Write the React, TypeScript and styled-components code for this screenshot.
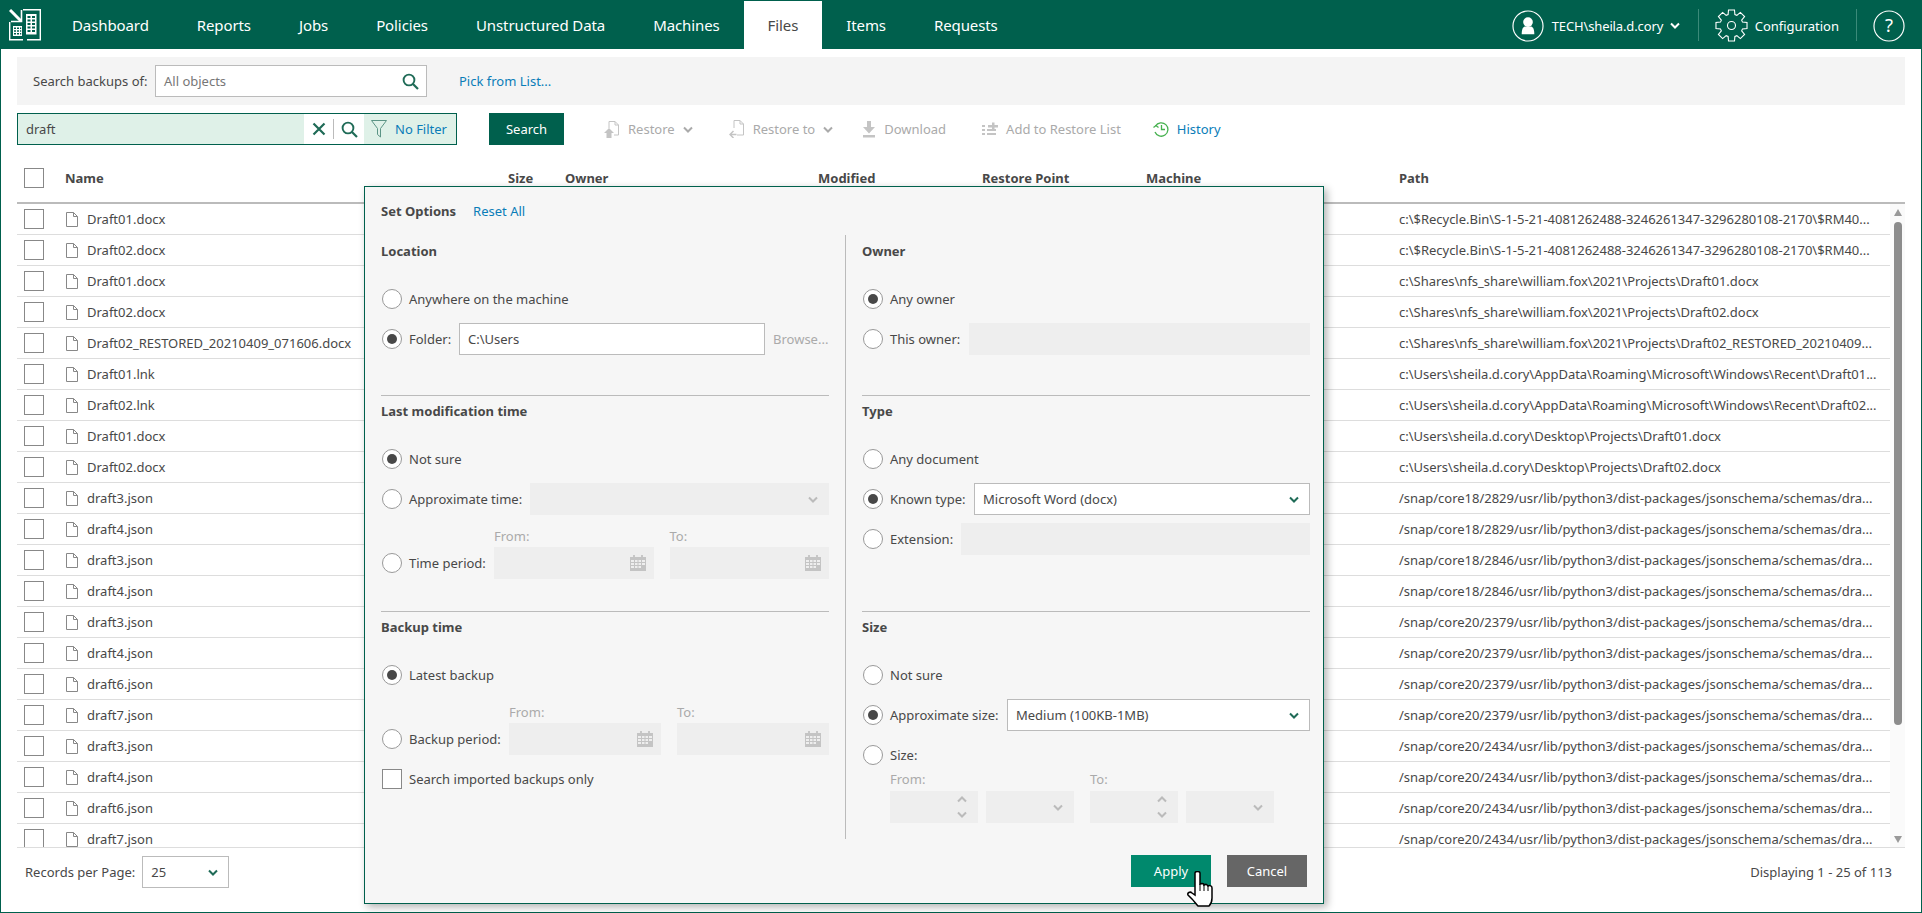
import React from "react";
import styled, { createGlobalStyle } from "styled-components";

const Global = createGlobalStyle`
  html, body { margin: 0; padding: 0; background: #fff; overflow: hidden; }
  body { font-family: "Noto Sans", "Open Sans", sans-serif; font-size: 13px; color: #484848; }
  * { box-sizing: border-box; }
`;

const GREEN = "#00604d";

const Page = styled.div`
  position: relative;
  width: 1922px;
  height: 913px;
  display: flex;
  flex-direction: column;
`;
const Header = styled.header`
  height: 49px;
  background: ${GREEN};
  display: flex;
  align-items: stretch;
  color: #fff;
  flex: none;
`;
const Logo = styled.div`
  width: 48px;
  padding: 9px 0 0 9px;
  flex: none;
`;
const Nav = styled.nav`
  display: flex;
  padding-top: 1px;
`;
const NavItem = styled.a<{ $active?: boolean }>`
  padding: 0 24px;
  font-size: 15px;
  letter-spacing: -0.1px;
  line-height: 48px;
  color: ${(p) => (p.$active ? "#484848" : "#fff")};
  background: ${(p) => (p.$active ? "#fff" : "transparent")};
`;
const HeaderRight = styled.div`
  margin-left: auto;
  display: flex;
  align-items: center;
  padding: 2px 17px 0 0;
`;
const UserName = styled.span`
  font-size: 13px;
  letter-spacing: -0.13px;
  margin: 0 6.5px 0 8px;
`;
const HeaderSep = styled.span<{ $ml: number; $mr: number }>`
  width: 1px;
  height: 32px;
  margin: -2px ${(p) => p.$mr}px 0 ${(p) => p.$ml}px;
  background: #3b8a79;
`;
const ConfigText = styled.span`
  font-size: 13px;
  margin-left: 7px;
`;

const Main = styled.main`
  flex: 1;
  display: flex;
  flex-direction: column;
  border: 1px solid ${GREEN};
  border-top: 0;
  padding: 8px 16px 0;
  min-height: 0;
`;
const SearchBand = styled.div`
  height: 48px;
  background: #f4f4f4;
  display: flex;
  align-items: center;
  padding-left: 16px;
  flex: none;
`;
const BandLabel = styled.span`
  width: 122px;
`;
const ObjectInput = styled.div`
  width: 272px;
  height: 32px;
  border: 1px solid #bbb;
  background: #fff;
  display: flex;
  align-items: center;
  justify-content: space-between;
  padding: 0 7px 0 8px;
  color: #777;
`;
const LinkText = styled.a<{ $ml?: number }>`
  color: #0a7db8;
  font-weight: 400;
  margin-left: ${(p) => p.$ml ?? 0}px;
`;
const ActionRow = styled.div`
  height: 32px;
  margin-top: 8px;
  display: flex;
  align-items: center;
  flex: none;
`;
const SearchBox = styled.div`
  width: 440px;
  height: 32px;
  border: 1px solid ${GREEN};
  background: #dff1e8;
  display: flex;
  align-items: center;
`;
const SearchValue = styled.span`
  width: 286px;
  padding-left: 8px;
`;
const SearchTools = styled.div`
  width: 60px;
  height: 30px;
  background: #fff;
  display: flex;
  align-items: center;
  justify-content: space-between;
  padding: 0 6px 0 8px;
`;
const ToolSep = styled.span`
  width: 1px;
  height: 20px;
  background: #bbb;
`;
const FilterPart = styled.div`
  display: flex;
  align-items: center;
  gap: 8px;
  padding-left: 7px;
  color: #0a7db8;
`;
const PrimaryButton = styled.button<{ $bg: string; $w: number }>`
  width: ${(p) => p.$w}px;
  height: 32px;
  border: 0;
  padding: 0;
  background: ${(p) => p.$bg};
  color: #fff;
  font: 13px "Noto Sans", "Open Sans", sans-serif;
`;
const SearchButton = styled(PrimaryButton)`
  margin-left: 32px;
`;
const ToolAction = styled.span<{ $ml: number; $on?: boolean }>`
  display: flex;
  align-items: center;
  gap: 8px;
  margin-left: ${(p) => p.$ml}px;
  color: ${(p) => (p.$on ? "#0a7db8" : "#aaa")};
`;
const Chevron = styled.svg`
  flex: none;
`;

const Cols = `49px 442px 57px 253px 164px 164px 253px 1fr`;
const TableHead = styled.div`
  height: 59px;
  padding-top: 9px;
  border-bottom: 2px solid #bbb;
  display: grid;
  grid-template-columns: ${Cols};
  align-items: center;
  font-weight: 700;
  flex: none;
`;
const NameHead = styled.span`
  margin-left: -1px;
`;
const Check = styled.span`
  display: block;
  width: 20px;
  height: 20px;
  border: 1px solid #888;
  background: #fff;
`;
const RowCheck = styled(Check)`
  margin-left: 7px;
`;
const TableScroll = styled.div`
  height: 644px;
  display: flex;
  overflow: hidden;
  border-bottom: 1px solid #ddd;
  flex: none;
`;
const Rows = styled.div`
  width: 1873px;
  flex: none;
`;
const Row = styled.div`
  height: 31px;
  border-bottom: 1px solid #ddd;
  display: grid;
  grid-template-columns: ${Cols};
  align-items: center;
`;
const NameCell = styled.div`
  display: flex;
  align-items: center;
  gap: 9px;
  grid-column: 2 / 8;
`;
const FileGlyph = styled.svg`
  flex: none;
`;
const PathCell = styled.div`
  white-space: nowrap;
  letter-spacing: -0.017px;
`;
const Track = styled.div`
  width: 15px;
  background: #fafafa;
  display: flex;
  flex-direction: column;
  align-items: center;
  padding: 5px 0 4px;
`;
const ArrowUp = styled.span`
  width: 0;
  height: 0;
  border: 4.5px solid transparent;
  border-top: 0;
  border-bottom: 7px solid #999;
`;
const ArrowDown = styled.span`
  width: 0;
  height: 0;
  margin-top: auto;
  border: 4.5px solid transparent;
  border-bottom: 0;
  border-top: 7px solid #999;
`;
const Thumb = styled.span`
  width: 8px;
  height: 503px;
  margin-top: 6px;
  background: #8c8c8c;
  border-radius: 4px;
`;
const Footer = styled.div`
  display: flex;
  align-items: flex-start;
  justify-content: space-between;
  padding: 8px 13px 0 8px;
  flex: 1;
`;
const PerPage = styled.div`
  display: flex;
  align-items: center;
  gap: 7px;
`;
const Select = styled.div<{ $w?: number }>`
  ${(p) => (p.$w ? `width: ${p.$w}px;` : "flex: 1;")}
  height: 32px;
  border: 1px solid #bbb;
  background: #fff;
  display: flex;
  align-items: center;
  justify-content: space-between;
  padding: 0 10px 0 8px;
`;
const Displaying = styled.span`
  line-height: 32px;
`;

/* Options popup */
const Dialog = styled.section`
  position: absolute;
  left: 364px;
  top: 186px;
  width: 960px;
  height: 718px;
  border: 1px solid ${GREEN};
  background: #f6f6f6;
  box-shadow: 3px 3px 8px rgba(0, 0, 0, 0.3);
  padding: 0 13px 0 16px;
  display: flex;
  flex-direction: column;
`;
const DialogHead = styled.div`
  height: 48px;
  display: flex;
  align-items: center;
  font-weight: 700;
  flex: none;
`;
const OptionCols = styled.div`
  display: flex;
  height: 604px;
  flex: none;
`;
const Col = styled.div<{ $left?: boolean }>`
  flex: none;
  width: ${(p) => (p.$left ? 465 : 464)}px;
  ${(p) =>
    p.$left
      ? "padding-right: 16px; border-right: 1px solid #bbb;"
      : "padding-left: 16px;"}
`;
const Section = styled.div<{ $h: number; $line?: boolean }>`
  height: ${(p) => p.$h}px;
  border-top: 1px solid ${(p) => (p.$line ? "#bbb" : "transparent")};
`;
const Heading = styled.h3`
  margin: 0 0 17px;
  height: 30px;
  line-height: 30px;
  font-size: 13px;
  font-weight: 700;
`;
const Stack = styled.div`
  display: flex;
  flex-direction: column;
  gap: 8px;
`;
const OptRow = styled.div<{ $h?: number }>`
  height: ${(p) => p.$h ?? 32}px;
  display: flex;
  align-items: center;
`;
const Radio = styled.span<{ $on?: boolean }>`
  width: 20px;
  height: 20px;
  margin: 0 7px 0 1px;
  border-radius: 50%;
  border: 1px solid #999;
  background: #fff;
  display: flex;
  align-items: center;
  justify-content: center;
  flex: none;
  &::after {
    content: "";
    display: ${(p) => (p.$on ? "block" : "none")};
    width: 10px;
    height: 10px;
    border-radius: 50%;
    background: #484848;
  }
`;
const DialogCheck = styled(Check)`
  margin: 0 7px 0 1px;
  flex: none;
`;
const OptLabel = styled.span<{ $w?: number }>`
  white-space: nowrap;
  flex: none;
  ${(p) => (p.$w ? `width: ${p.$w}px;` : "")}
`;
const TextField = styled.div<{ $w?: number; $off?: boolean; $chev?: boolean }>`
  ${(p) => (p.$w ? `width: ${p.$w}px; flex: none;` : "flex: 1;")}
  height: 32px;
  background: ${(p) => (p.$off ? "#eee" : "#fff")};
  border: ${(p) => (p.$off ? "0" : "1px solid #bbb")};
  display: flex;
  align-items: center;
  justify-content: space-between;
  padding: 0 ${(p) => (p.$chev ? 11 : 8)}px 0 8px;
`;
const Browse = styled.span`
  margin-left: 8px;
  color: #aaa;
`;
const DimLabels = styled.div<{ $pad: number }>`
  height: 24px;
  padding: 1px 0 0 ${(p) => p.$pad}px;
  display: grid;
  grid-template-columns: 1fr 1fr;
  column-gap: 16px;
  align-items: center;
  color: #aaa;
`;
const Pair = styled.div`
  flex: 1;
  display: grid;
  grid-template-columns: 1fr 1fr;
  column-gap: 16px;
`;
const SizeGroup = styled.div`
  margin-top: 4px;
`;
const SizeGrid = styled.div`
  padding-left: 28px;
  display: grid;
  grid-template-columns: 184px 184px;
  column-gap: 16px;
`;
const SizeLabel = styled.div`
  height: 24px;
  line-height: 24px;
  color: #aaa;
`;
const SizePair = styled.div`
  display: grid;
  grid-template-columns: 88px 88px;
  column-gap: 8px;
`;
const Spinner = styled.span`
  display: flex;
  flex-direction: column;
  gap: 8px;
`;
const DialogActions = styled.div`
  flex: 1;
  display: flex;
  justify-content: flex-end;
  gap: 16px;
  padding: 16px 3px 0 0;
`;
const HandCursor = styled.svg`
  position: absolute;
  left: 1187px;
  top: 871px;
`;

const C = ({ color = "#1f6b57", up = false }: { color?: string; up?: boolean }) => (
  <Chevron width="10" height="7" viewBox="0 0 10 7">
    <path d={up ? "M1 5.5 5 1.5l4 4" : "M1 1.5l4 4 4-4"} fill="none" stroke={color} strokeWidth="2" />
  </Chevron>
);
const Mag = () => (
  <svg width="17" height="17" viewBox="0 0 17 17">
    <circle cx="7" cy="7" r="5.4" fill="none" stroke="#1f6b57" strokeWidth="1.9" />
    <path d="M11 11l5 5" stroke="#1f6b57" strokeWidth="2.2" />
  </svg>
);
const FileIco = () => (
  <FileGlyph width="12" height="15" viewBox="0 0 12 15">
    <path d="M.5.5h7l4 4v10H.5z M7.5.5v4h4" fill="#fff" stroke="#888" />
  </FileGlyph>
);
const Cal = () => (
  <svg width="16" height="16" viewBox="0 0 16 16">
    <path d="M4 0v3M12 0v3" stroke="#bbb" strokeWidth="1.5" />
    <path d="M0 2h16v14H0z" fill="#c4c4c4" />
    <path d="M1 5h3v2H1zM5 5h2.500v2H5zM8.500 5H11v2H8.500zM12 5h3v2h-3zM1 8h3v2H1zM5 8h2.500v2H5zM8.500 8H11v2H8.500zM12 8h3v2h-3zM1 11h3v2H1zM5 11h2.500v2H5zM8.500 11H11v2H8.500z" fill="#eee" />
  </svg>
);

const LogoMark = () => (
  <svg width="32" height="32" viewBox="0 0 32 32" fill="none" stroke="#fff">
    <path d="M1 1l11 11" strokeWidth="3" />
    <path d="M12.500 1v11.500H2" strokeWidth="1.600" />
    <path d="M14 .7h17.300v30H18" strokeWidth="1.400" />
    <path d="M.7 13v17.700H14" strokeWidth="1.400" />
    <rect x="17" y="5" width="10.500" height="20.500" fill="#fff" stroke="none" />
    <path d="M18.500 7h3v2h-3zM23 7h3v2h-3zM18.500 10.500h3v2h-3zM23 10.500h3v2h-3zM18.500 14h3v2h-3zM23 14h3v2h-3zM18.500 17.500h3v2h-3zM23 17.500h3v2h-3zM18.500 21h3v2h-3zM23 21h3v2h-3z" fill={GREEN} stroke="none" />
    <rect x="4" y="17" width="9" height="10" fill="#fff" stroke="none" />
    <path d="M5 18.500h2v1.500H5zM8 18.500h2v1.500H8zM11 18.500h1.200v1.500H11zM5 21.200h2v1.500H5zM8 21.200h2v1.500H8zM11 21.200h1.200v1.500H11zM5 24h2v1.500H5zM8 24h2v1.500H8zM11 24h1.200v1.500H11z" fill={GREEN} stroke="none" />
  </svg>
);

const gearPath = () => {
  const n = 8;
  const pts: string[] = [];
  for (let i = 0; i < n; i++) {
    const a = (i / n) * Math.PI * 2 - Math.PI / 2;
    const s = 0.19;
    const pt = (r: number, t: number) =>
      `${(16.5 + r * Math.cos(a + t)).toFixed(2)} ${(16.5 + r * Math.sin(a + t)).toFixed(2)}`;
    pts.push(pt(11.5, -0.3), pt(15.8, -s), pt(15.8, s), pt(11.5, 0.3));
  }
  return `M${pts.join("L")}Z`;
};

const names = ["Draft01.docx","Draft02.docx","Draft01.docx","Draft02.docx","Draft02_RESTORED_20210409_071606.docx","Draft01.lnk","Draft02.lnk","Draft01.docx","Draft02.docx","draft3.json","draft4.json","draft3.json","draft4.json","draft3.json","draft4.json","draft6.json","draft7.json","draft3.json","draft4.json","draft6.json","draft7.json"];
const rb = "c:\\$Recycle.Bin\\S-1-5-21-4081262488-3246261347-3296280108-2170\\$RM40...";
const sn = (c: string) => `/snap/${c}/usr/lib/python3/dist-packages/jsonschema/schemas/dra...`;
const paths = [rb, rb,
  "c:\\Shares\\nfs_share\\william.fox\\2021\\Projects\\Draft01.docx",
  "c:\\Shares\\nfs_share\\william.fox\\2021\\Projects\\Draft02.docx",
  "c:\\Shares\\nfs_share\\william.fox\\2021\\Projects\\Draft02_RESTORED_20210409...",
  "c:\\Users\\sheila.d.cory\\AppData\\Roaming\\Microsoft\\Windows\\Recent\\Draft01...",
  "c:\\Users\\sheila.d.cory\\AppData\\Roaming\\Microsoft\\Windows\\Recent\\Draft02...",
  "c:\\Users\\sheila.d.cory\\Desktop\\Projects\\Draft01.docx",
  "c:\\Users\\sheila.d.cory\\Desktop\\Projects\\Draft02.docx",
  sn("core18/2829"), sn("core18/2829"), sn("core18/2846"), sn("core18/2846"),
  sn("core20/2379"), sn("core20/2379"), sn("core20/2379"), sn("core20/2379"),
  sn("core20/2434"), sn("core20/2434"), sn("core20/2434"), sn("core20/2434")];

export default function App() {
  return (
    <Page>
      <Global />
      <Header>
        <Logo><LogoMark /></Logo>
        <Nav>
          {["Dashboard","Reports","Jobs","Policies","Unstructured Data","Machines"].map((n) => <NavItem key={n}>{n}</NavItem>)}
          <NavItem $active>Files</NavItem>
          <NavItem>Items</NavItem>
          <NavItem>Requests</NavItem>
        </Nav>
        <HeaderRight>
          <svg width="32" height="32" viewBox="0 0 33 33">
            <circle cx="16.500" cy="16.500" r="15.500" fill="none" stroke="#fff" strokeWidth="1.200" />
            <circle cx="16.500" cy="12.500" r="5" fill="#fff" />
            <path d="M10 25c0-5 1-7 3-8h7c2 1 3 3 3 8z" fill="#fff" />
          </svg>
          <UserName>TECH\sheila.d.cory</UserName>
          <C color="#fff" />
          <HeaderSep $ml={18} $mr={16} />
          <svg width="33" height="33" viewBox="0 0 33 33" fill="none" stroke="#fff" strokeWidth="1.100">
            <circle cx="16.500" cy="16.500" r="4" />
            <path d={gearPath()} />
          </svg>
          <ConfigText>Configuration</ConfigText>
          <HeaderSep $ml={17} $mr={16} />
          <svg width="32" height="32" viewBox="0 0 33 33">
            <circle cx="16.500" cy="16.500" r="15.500" fill="none" stroke="#fff" strokeWidth="1.200" />
            <text x="16.500" y="23" textAnchor="middle" fill="#fff" fontSize="19" fontFamily="Noto Sans, sans-serif">?</text>
          </svg>
        </HeaderRight>
      </Header>
      <Main>
        <SearchBand>
          <BandLabel>Search backups of:</BandLabel>
          <ObjectInput>All objects<Mag /></ObjectInput>
          <LinkText $ml={32}>Pick from List...</LinkText>
        </SearchBand>
        <ActionRow>
          <SearchBox>
            <SearchValue>draft</SearchValue>
            <SearchTools>
              <svg width="14" height="14" viewBox="0 0 14 14"><path d="M1.500 1.500l11 11M12.500 1.500l-11 11" stroke="#1f6b57" strokeWidth="2.200" /></svg>
              <ToolSep />
              <Mag />
            </SearchTools>
            <FilterPart>
              <svg width="16" height="18" viewBox="0 0 16 18" fill="none" stroke="#5b9485"><path d="M.5.500h15l-6 8v8.500l-3-2.500v-6z" /></svg>
              No Filter
            </FilterPart>
          </SearchBox>
          <SearchButton $bg={GREEN} $w={75}>Search</SearchButton>
          <ToolAction $ml={40}>
            <svg width="16" height="17" viewBox="0 0 16 17" fill="none" stroke="#c4c4c4"><path d="M5 7V.5h6l3.500 3.500v10H10M11 .5V4h3.500" /><path d="M5 7l5 5H7.500v5h-5v-5H0z" fill="#c4c4c4" stroke="none" /></svg>
            <span>Restore</span><C color="#aaa" />
          </ToolAction>
          <ToolAction $ml={36}>
            <svg width="16" height="18" viewBox="0 0 16 18" fill="none" stroke="#c4c4c4"><path d="M5 8V.5h6l3.500 3.500v11H8M11 .5V4h3.500" /><path d="M1 14.500h6.500M4.500 11l-3.500 3.500L4.500 18" strokeWidth="1.500" /></svg>
            <span>Restore to</span><C color="#aaa" />
          </ToolAction>
          <ToolAction $ml={29}>
            <svg width="14" height="17" viewBox="0 0 14 17" fill="#c4c4c4"><path d="M5 0h4v6h4l-6 6.500L1 6h4zM1 14h12v2.500H1z" /></svg>
            <span>Download</span>
          </ToolAction>
          <ToolAction $ml={36}>
            <svg width="16" height="17" viewBox="0 0 16 17" fill="#c4c4c4"><path d="M0 4h3v2H0zM0 8h3v2H0zM0 12h3v2H0zM5 8h9v2H5zM5 12h9v2H5zM6 4h4V1.500h2.500V4H16v2.500h-3.500V9H10V6.500H6z" /></svg>
            <span>Add to Restore List</span>
          </ToolAction>
          <ToolAction $ml={32} $on>
            <svg width="16" height="16" viewBox="0 0 16 16" fill="none" stroke="#46b14f" strokeWidth="1.300"><path d="M2.500 5A6.700 6.700 0 1 1 2 11" /><path d="M.5 6.500 3 4.500l2.500 2" /><path d="M8.500 4v4.500H12" /></svg>
            <span>History</span>
          </ToolAction>
        </ActionRow>
        <TableHead>
          <RowCheck />
          <NameHead>Name</NameHead><span>Size</span><span>Owner</span><span>Modified</span><span>Restore Point</span><span>Machine</span><span>Path</span>
        </TableHead>
        <TableScroll>
          <Rows>
            {names.map((n, i) => (
              <Row key={i}>
                <RowCheck />
                <NameCell><FileIco />{n}</NameCell>
                <PathCell>{paths[i]}</PathCell>
              </Row>
            ))}
          </Rows>
          <Track><ArrowUp /><Thumb /><ArrowDown /></Track>
        </TableScroll>
        <Footer>
          <PerPage>Records per Page:<Select $w={87}>25<C /></Select></PerPage>
          <Displaying>Displaying 1 - 25 of 113</Displaying>
        </Footer>
      </Main>
      <Dialog>
        <DialogHead>Set Options<LinkText $ml={17}>Reset All</LinkText></DialogHead>
        <OptionCols>
          <Col $left>
            <Section $h={160}>
              <Heading>Location</Heading>
              <Stack>
                <OptRow><Radio /><OptLabel>Anywhere on the machine</OptLabel></OptRow>
                <OptRow><Radio $on /><OptLabel $w={50}>Folder:</OptLabel><TextField $w={306}>C:\Users</TextField><Browse>Browse...</Browse></OptRow>
              </Stack>
            </Section>
            <Section $h={216} $line>
              <Heading>Last modification time</Heading>
              <Stack>
                <OptRow><Radio $on /><OptLabel>Not sure</OptLabel></OptRow>
                <OptRow><Radio /><OptLabel $w={121}>Approximate time:</OptLabel><TextField $off $chev><span /><C color="#bbb" /></TextField></OptRow>
                <div>
                  <DimLabels $pad={113}><span>From:</span><span>To:</span></DimLabels>
                  <OptRow><Radio /><OptLabel $w={85}>Time period:</OptLabel><Pair><TextField $off><span /><Cal /></TextField><TextField $off><span /><Cal /></TextField></Pair></OptRow>
                </div>
              </Stack>
            </Section>
            <Section $h={228} $line>
              <Heading>Backup time</Heading>
              <Stack>
                <OptRow><Radio $on /><OptLabel>Latest backup</OptLabel></OptRow>
                <div>
                  <DimLabels $pad={128}><span>From:</span><span>To:</span></DimLabels>
                  <OptRow><Radio /><OptLabel $w={100}>Backup period:</OptLabel><Pair><TextField $off><span /><Cal /></TextField><TextField $off><span /><Cal /></TextField></Pair></OptRow>
                </div>
                <OptRow><DialogCheck /><OptLabel>Search imported backups only</OptLabel></OptRow>
              </Stack>
            </Section>
          </Col>
          <Col>
            <Section $h={160}>
              <Heading>Owner</Heading>
              <Stack>
                <OptRow><Radio $on /><OptLabel>Any owner</OptLabel></OptRow>
                <OptRow><Radio /><OptLabel $w={79}>This owner:</OptLabel><TextField $off /></OptRow>
              </Stack>
            </Section>
            <Section $h={216} $line>
              <Heading>Type</Heading>
              <Stack>
                <OptRow><Radio /><OptLabel>Any document</OptLabel></OptRow>
                <OptRow><Radio $on /><OptLabel $w={84}>Known type:</OptLabel><Select>Microsoft Word (docx)<C /></Select></OptRow>
                <OptRow><Radio /><OptLabel $w={71}>Extension:</OptLabel><TextField $off /></OptRow>
              </Stack>
            </Section>
            <Section $h={228} $line>
              <Heading>Size</Heading>
              <Stack>
                <OptRow><Radio /><OptLabel>Not sure</OptLabel></OptRow>
                <OptRow><Radio $on /><OptLabel $w={117}>Approximate size:</OptLabel><Select>Medium (100KB-1MB)<C /></Select></OptRow>
                <SizeGroup>
                  <OptRow $h={24}><Radio /><OptLabel>Size:</OptLabel></OptRow>
                  <SizeGrid>
                    <div>
                      <SizeLabel>From:</SizeLabel>
                      <SizePair>
                        <TextField $off $chev><span /><Spinner><C color="#bbb" up /><C color="#bbb" /></Spinner></TextField>
                        <TextField $off $chev><span /><C color="#bbb" /></TextField>
                      </SizePair>
                    </div>
                    <div>
                      <SizeLabel>To:</SizeLabel>
                      <SizePair>
                        <TextField $off $chev><span /><Spinner><C color="#bbb" up /><C color="#bbb" /></Spinner></TextField>
                        <TextField $off $chev><span /><C color="#bbb" /></TextField>
                      </SizePair>
                    </div>
                  </SizeGrid>
                </SizeGroup>
              </Stack>
            </Section>
          </Col>
        </OptionCols>
        <DialogActions>
          <PrimaryButton $bg="#00896d" $w={80}>Apply</PrimaryButton>
          <PrimaryButton $bg="#666" $w={80}>Cancel</PrimaryButton>
        </DialogActions>
      </Dialog>
      <HandCursor width="28" height="36" viewBox="0 0 28 36">
        <path d="M8 2c0-2 5-2 5 0v11l2-.5c1 0 2 .5 2 1.500 2-1 3-1 4 1 2-1 4 0 4 2v10c0 4-1 6-3 8H11c-2-2-4-5-6-7l-4-4c-1-2 2-4 4-2l3 2z" fill="#fff" stroke="#000" strokeWidth="1.500" />
        <path d="M13 13v7M17 14v6M21 15v5" stroke="#000" strokeWidth="1" />
      </HandCursor>
    </Page>
  );
}
